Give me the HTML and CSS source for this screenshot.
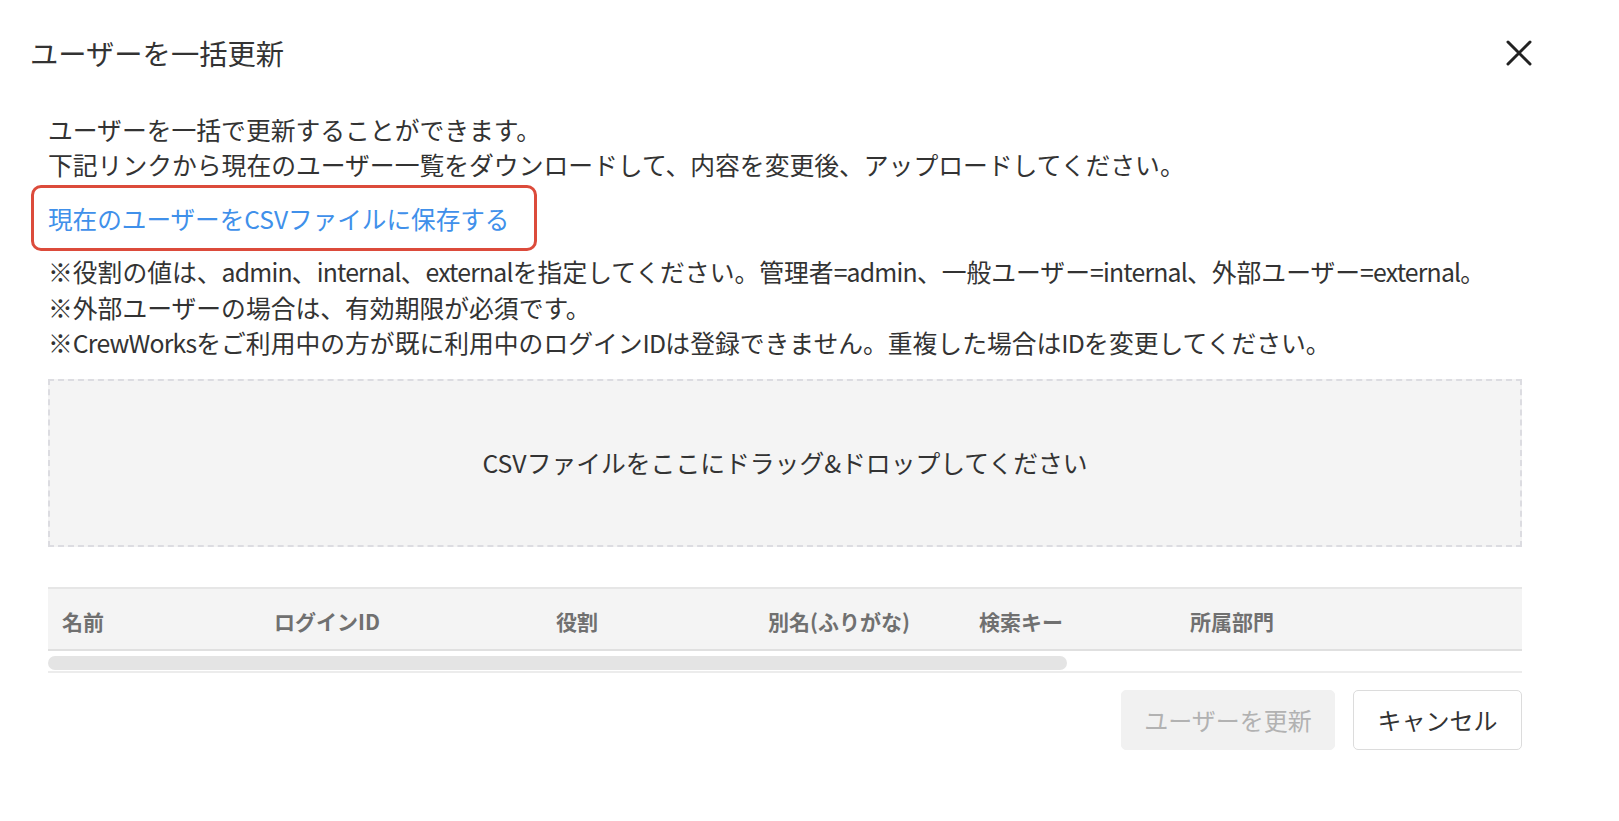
FILE: index.html
```html
<!DOCTYPE html>
<html lang="ja">
<head>
<meta charset="utf-8">
<title>ユーザーを一括更新</title>
<link rel="stylesheet" href="styles.css">
</head>
<body>
<div class="dialog">
  <header class="dialog-header">
    <h1 class="dialog-title">ユーザーを一括更新</h1>
    <button class="close-btn" aria-label="閉じる">
      <svg width="26" height="26" viewBox="0 0 26 26"><path d="M2 2 L24 24 M24 2 L2 24" stroke="#222" stroke-width="3" stroke-linecap="round" fill="none"/></svg>
    </button>
  </header>
  <div class="dialog-body">
    <p class="intro">ユーザーを一括で更新することができます。<br>下記リンクから現在のユーザー一覧をダウンロードして、内容を変更後、アップロードしてください。</p>
    <div class="link-box"><a class="csv-link" href="#">現在のユーザーをCSVファイルに保存する</a></div>
    <p class="notes">※役割の値は、<span class="en">admin</span>、<span class="en">internal</span>、<span class="en">external</span>を指定してください。管理者<span class="en">=admin</span>、一般ユーザー<span class="en">=internal</span>、外部ユーザー<span class="en">=external</span>。<br>※外部ユーザーの場合は、有効期限が必須です。<br>※<span class="en">CrewWorks</span>をご利用中の方が既に利用中のログイン<span class="en">ID</span>は登録できません。重複した場合は<span class="en">ID</span>を変更してください。</p>
    <div class="dropzone">CSVファイルをここにドラッグ&amp;ドロップしてください</div>
    <div class="table">
      <div class="table-head">
        <div class="th">名前</div>
        <div class="th">ログインID</div>
        <div class="th">役割</div>
        <div class="th">別名(ふりがな)</div>
        <div class="th">検索キー</div>
        <div class="th">所属部門</div>
      </div>
      <div class="scroll-track"><div class="scroll-thumb"></div></div>
    </div>
    <div class="actions">
      <button class="btn btn-disabled" disabled>ユーザーを更新</button>
      <button class="btn btn-default">キャンセル</button>
    </div>
  </div>
</div>
</body>
</html>
```
FILE: styles.css
```css
* { box-sizing: border-box; }
html, body { margin: 0; padding: 0; background: #fff; }
body {
  font-family: "Noto Sans CJK JP", "Noto Sans", sans-serif;
  color: #333;
  width: 1619px;
  height: 821px;
  overflow: hidden;
}
.dialog { width: 1619px; }
.dialog-header {
  height: 106px;
  display: flex;
  align-items: center;
  justify-content: space-between;
  padding: 0 87px 0 30px;
}
.dialog-title {
  margin: 0;
  font-size: 28.3px;
  font-weight: 400;
  line-height: 34px;
  color: #333;
}
.close-btn {
  border: 0;
  background: none;
  padding: 0;
  width: 26px;
  height: 26px;
  display: flex;
}
.dialog-body { padding: 0 97px 0 48px; }
.intro {
  margin: 6px 0 0;
  font-size: 24.8px;
  line-height: 35px;
}
.link-box {
  margin: 3px 0 0 -17px;
  width: 506px;
  border: 3px solid #dc4b3b;
  border-radius: 10px;
  padding: 12px 0 12px 14px;
  line-height: 36px;
  font-size: 24.6px;
}
.csv-link { color: #4090ea; text-decoration: none; }
.notes {
  margin: 3px 0 0;
  font-size: 24.8px;
  line-height: 35.5px;
}
.notes .en { letter-spacing: -0.8px; }
.dropzone {
  margin-top: 18px;
  height: 168px;
  background: #f4f4f4;
  border: 2px dashed #dcdce1;
  display: flex;
  align-items: center;
  justify-content: center;
  font-size: 24.8px;
  color: #333;
  padding-bottom: 2px;
}
.table {
  margin-top: 40px;
  border-bottom: 2px solid #ececec;
}
.table-head {
  display: grid;
  grid-template-columns: 212px 282px 212px 211px 211px 1fr;
  height: 64px;
  background: #f4f4f4;
  border-top: 2px solid #e6e6e6;
  border-bottom: 2px solid #e0e0e0;
  align-items: center;
}
.th {
  padding: 4px 0 0 14px;
  font-size: 21px;
  font-weight: 700;
  color: #707070;
}
.scroll-track { height: 20px; padding-top: 5px; }
.scroll-thumb {
  width: 1019px;
  height: 14px;
  border-radius: 7px;
  background: #e4e4e4;
}
.actions {
  margin-top: 17px;
  display: flex;
  justify-content: flex-end;
  gap: 18px;
}
.btn {
  height: 60px;
  font-family: inherit;
  font-size: 24px;
  border-radius: 5px;
  padding: 0 20px;
}
.btn-disabled {
  width: 214px;
  background: #f1f1f1;
  border: 1px solid #f1f1f1;
  color: #b2b2b2;
}
.btn-default {
  width: 169px;
  background: #fff;
  border: 1px solid #dcdcdc;
  color: #333;
}
```
